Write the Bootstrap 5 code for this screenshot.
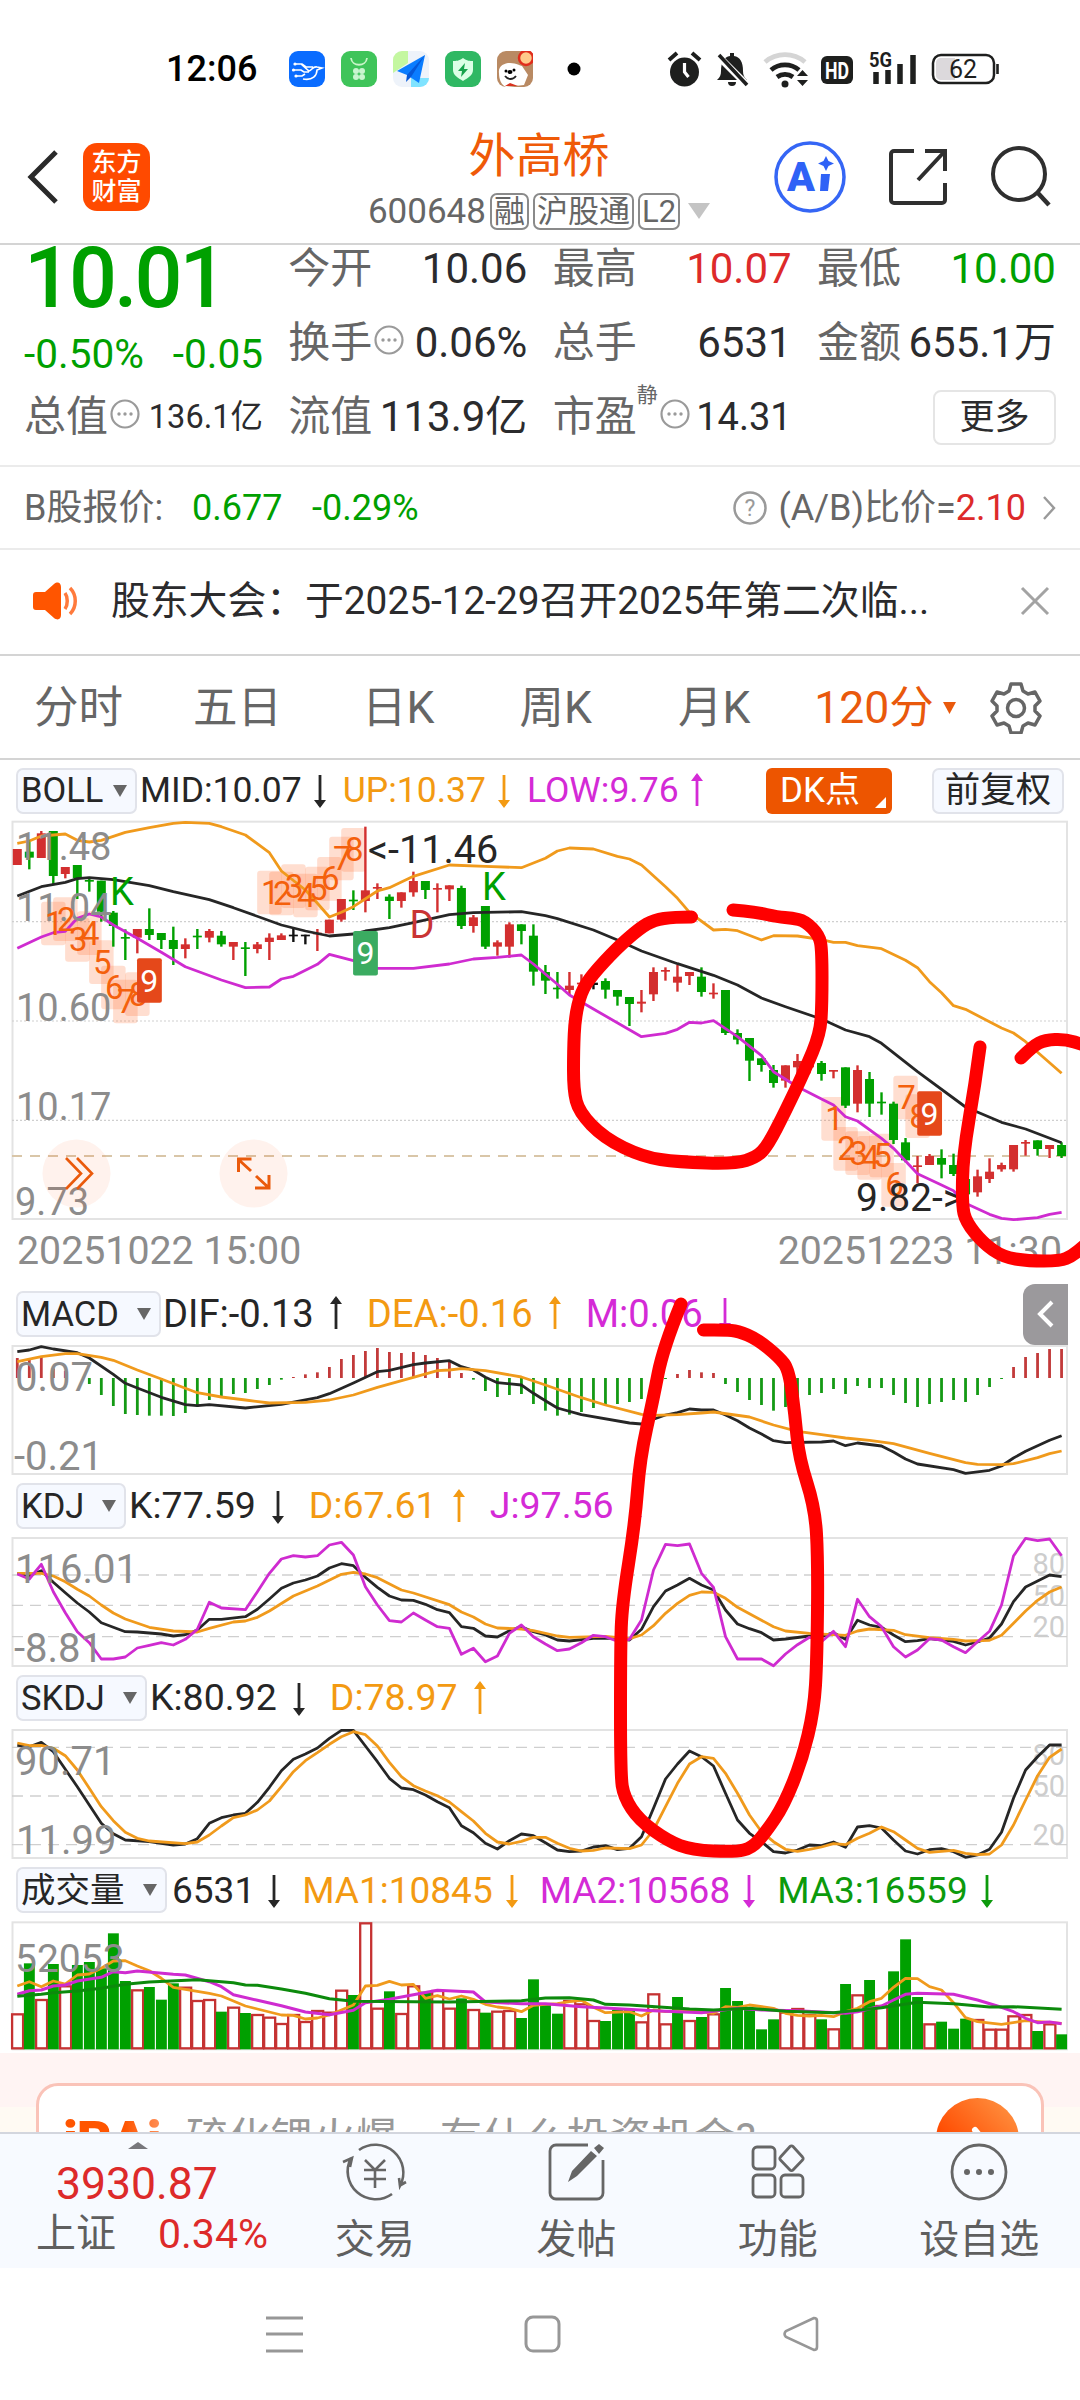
<!DOCTYPE html>
<html lang="zh-CN">
<head>
<meta charset="UTF-8">
<meta name="viewport" content="width=device-width, initial-scale=1">
<title>外高桥 600648</title>
<link rel="stylesheet" href="https://cdn.jsdelivr.net/npm/bootstrap@5.3.3/dist/css/bootstrap.min.css">
<style>
body {
	font-family: Roboto, "Noto Sans CJK SC", sans-serif;
	color: #2b2b2d;
	line-height: 1;
	background: #fff;
}
svg { display: block; flex: none; }
.phone { width: 1080px; height: 2400px; overflow: hidden; white-space: nowrap; }
.up { color: #dd2a2a; }
.down { color: #00a000; }
.soft { color: #666; }
.c-k { color: #262626; }
.c-o { color: #f39a12; }
.c-m { color: #d42ad6; }
.c-g { color: #0c9a0c; }

/* status bar */
.status { height: 108px; padding: 28px 81px 0 166px; }
.status-side { height: 82px; gap: 16px; }
.clock { font-size: 36px; font-weight: 500; color: #000; width: 107px; }

/* header */
.topbar { height: 137px; border-bottom: 2px solid #d4d4d4; padding: 2px 29px 0 27px; }
.side-box { width: 300px; }
.app-logo { width: 67px; height: 68px; border-radius: 14px; background: #ff4a00; color: #fff; font-size: 25px; font-weight: 500; line-height: 29px; margin-left: 24px; }
.title-box { padding-top: 8px; }
.stock-name { font-size: 47px; color: #ef5a08; }
.stock-code { font-size: 35px; color: #666; gap: 4px; margin-top: 14px; }
.tagbox { border: 2px solid #8a8a8a; border-radius: 7px; height: 37px; font-size: 31px; line-height: 33px; padding: 0 2px; }

/* quote */
.quote { height: 222px; border-bottom: 2px solid #ebebeb; padding: 0 24px; }
.col-q { width: 239px; }
.q-row { height: 74px; font-size: 42px; }
.q-first { margin-top: -13px; }
.price { font-size: 84.5px; font-weight: 500; letter-spacing: -3px; height: 84px; margin-top: -8px; }
.chg { font-size: 40.5px; height: 59px; padding-top: 13px; }
.btn-more { width: 123px; height: 55px; border: 2px solid #e5e5e5; border-radius: 8px; font-size: 35px; }
.bshare { height: 83px; border-bottom: 2px solid #ebebeb; font-size: 36px; padding: 0 24px 0 24px; }
.notice { height: 106px; border-bottom: 2px solid #d4d4d4; font-size: 38.8px; padding: 0 30px 2px 33px; }
.tabs-k { height: 104px; border-bottom: 2px solid #d4d4d4; font-size: 44.5px; color: #666; padding: 2px 0 0 34px; }
.tabs-k > :nth-child(2) { margin-left: 70px; }
.tabs-k > :nth-child(3) { margin-left: 80px; }
.tabs-k > :nth-child(4) { margin-left: 85px; }
.tabs-k > :nth-child(5) { margin-left: 86px; }
.tabs-k > :nth-child(6) { margin-left: 64px; }
.tabs-k > :nth-child(7) { margin-left: 34px; }

/* indicator legends */
.legend { height: 56px; padding-left: 16px; font-size: 37.5px; }
.legend-boll { height: 55px; padding-top: 6px; font-size: 35.5px; }
.legend-macd { font-size: 38.2px; }
.legend-vol { font-size: 37px; }
.pick { height: 46px; border: 2px solid #e1e3ea; border-radius: 7px; background: #f6f9ff; color: #262626; font-size: 34.5px; padding: 0 8px 0 3px; }
.arrow { margin-left: 16px; margin-right: 25px; }
.legend-boll .arrow { margin-left: 12px; margin-right: 17px; }
.legend-vol .arrow { margin-left: 13px; margin-right: 22px; }
.btn-dk { width: 126px; height: 46px; background: #ed5500; border-radius: 6px; color: #fff; font-size: 35px; padding-left: 14px; position: relative; }
.dk-corner { position: absolute; right: 6px; bottom: 6px; }
.btn-adj { width: 132px; margin-left: 40px; margin-right: 16px; padding: 0; font-size: 35.5px; }
.btn-fold { width: 45px; height: 61px; border-radius: 12px 0 0 12px; background: #9b999c; margin-right: 12px; }
.dates { height: 59px; font-size: 39.3px; color: #8c8c8c; padding: 5px 18px 0 17px; }

/* AI strip */
.ai-wrap { height: 79px; background: linear-gradient(#fff4f3 54px, #fffaf3 54px); padding: 30px 36px 0; overflow: hidden; }
.ai-card { height: 110px; border: 3px solid #fac3b8; border-radius: 22px; background: #fff; padding: 12px 22px 0 24px; }
.ai-logo { font-size: 54px; font-weight: 900; height: 80px; line-height: 86px; letter-spacing: -1px; background: linear-gradient(90deg, #ff5500 50%, #ffa477 90%); -webkit-background-clip: text; color: transparent; width: 123px; }
.ai-text { font-size: 42.3px; color: #999; line-height: 40px; padding-top: 21px; }
.ai-go { width: 83px; height: 83px; border-radius: 50%; background: linear-gradient(45deg, #ff4a00 30%, #ff9a48); }

/* bottom bars */
.bottombar { height: 136px; background: #f7faff; border-top: 2px solid #d3d6de; color: #5f5f5f; font-size: 40px; }
.idx-box { width: 274px; }
.nav-box { width: 201.5px; padding-top: 8px; gap: 18px; }
.sysbar { height: 131px; padding-left: 266px; gap: 221px; }
.scribble { position: absolute; left: 0; top: 0; pointer-events: none; }
</style>
</head>
<body>
<div class="phone position-relative">

	<div class="status d-flex justify-content-between">
		<div class="status-side d-flex align-items-center">
			<span class="clock">12:06</span>
			<svg width="36" height="36" viewBox="0 0 36 36"><rect width="36" height="36" rx="9" fill="#0a6cff"/><path d="M6 13h7l4 3h7M4 19h8l3 2h5M7 25h6l3-2M14 28c10 2 14-4 14-9l5-2-5-1c-4-1-5 3-8 4l-8-7" fill="none" stroke="#fff" stroke-width="1.600"/><circle cx="6" cy="13" r="1.600" fill="#fff"/><circle cx="4.500" cy="19" r="1.600" fill="#fff"/><circle cx="7" cy="25" r="1.600" fill="#fff"/></svg>
			<svg width="36" height="36" viewBox="0 0 36 36"><rect width="36" height="36" rx="9" fill="#3fc45a"/><path d="M10 7c1 9 15 9 16 0" fill="none" stroke="#c9f5c9" stroke-width="1.800"/><g fill="#c9f5d0"><circle cx="15" cy="20" r="3"/><circle cx="21" cy="20" r="3"/><circle cx="15" cy="26" r="3"/><circle cx="21" cy="26" r="3"/></g></svg>
			<svg width="36" height="36" viewBox="0 0 36 36"><rect width="36" height="36" rx="9" fill="#eef3fa"/><path d="M9 0h6v12L0 22V9a9 9 0 0 1 9-9z" fill="#c4f7a0"/><path d="M18 27h18a9 9 0 0 1-9 9h-9z" fill="#7fe3ff"/><path d="M32 4 4 20l10 4 12 8z" fill="#0a7dff"/><path d="M32 4 14 24l-1 7 5-5z" fill="#0558d8"/></svg>
			<svg width="36" height="36" viewBox="0 0 36 36"><rect width="36" height="36" rx="9" fill="#2fb863"/><path d="M18 7c4 3 7 3 10 3v9c0 5-5 8-10 11-5-3-10-6-10-11v-9c3 0 6 0 10-3z" fill="#dcffe6"/><path d="M20 12l-7 8h4l-1 6 7-8h-4z" fill="#17a34c"/></svg>
			<svg width="36" height="36" viewBox="0 0 36 36"><rect width="36" height="36" rx="9" fill="#b98a63"/><circle cx="29" cy="7" r="7" fill="#ffc98a" stroke="#e02d1c" stroke-width="2.500"/><path d="M2 22c-1-7 5-10 11-10 7 0 10 3 12 3l6 9-4 10-18 2c-5-2-7-8-7-14z" fill="#fff"/><path d="M8 25c3 4 8 4 11 0" fill="none" stroke="#222" stroke-width="1.800"/><circle cx="9" cy="20" r="1.500"/><circle cx="17" cy="19" r="1.500"/><ellipse cx="13" cy="21" rx="2.500" ry="2"/><path d="M8 35l5-3 8 3z" fill="#d8321e"/></svg>
			<svg width="70" height="36" viewBox="0 0 70 36"><circle cx="25" cy="18" r="6.500"/></svg>
		</div>
		<div class="status-side d-flex align-items-center">
			<svg width="332" height="40" viewBox="668 49 332 40">
				<g fill="#1e1f1e" stroke="none">
					<circle cx="685.500" cy="72" r="14.500"/>
					<path d="M670 60l8-7M701 60l-8-7" stroke="#1e1f1e" stroke-width="4"/>
					<path d="M685.500 63v9l4 5" stroke="#fff" stroke-width="3.200" fill="none"/>
					<path d="M718 80c3-3 4-5 4-9 0-9 3-14 9-15v-3h4v3c6 1 9 6 9 15 0 4 1 6 4 9zM729 82h8a4 4 0 0 1-8 0z"/>
					<path d="M719 56l29 29" stroke="#fff" stroke-width="7"/><path d="M720 55l28 30" stroke="#1e1f1e" stroke-width="3.600"/>
				</g>
				<g fill="none" stroke-width="4.800">
					<path d="M766 62a31 31 0 0 1 40 0" stroke="#d5d5d5"/><path d="M772 70a22 22 0 0 1 28 0" stroke="#1e1f1e"/><path d="M778 77a14 14 0 0 1 16 0" stroke="#1e1f1e"/>
				</g>
				<circle cx="786" cy="84" r="3.500" fill="#1e1f1e"/><path d="M798 76l5.500-6 5.500 6zM798 80h11l-5.500 6z" fill="#1e1f1e"/>
				<rect x="822" y="56" width="32" height="28" rx="6" fill="#1e1f1e"/><text x="826" y="78.500" textLength="24" lengthAdjust="spacingAndGlyphs" font-size="24" font-weight="700" fill="#fff">HD</text>
				<text x="870" y="67" textLength="23" lengthAdjust="spacingAndGlyphs" font-size="20" font-weight="700" fill="#1e1f1e">5G</text>
				<path d="M877 84V72M889 84V70M901 84V64M914 84V55" stroke="#1e1f1e" stroke-width="5.500"/>
				<rect x="934" y="55" width="61" height="28" rx="8" fill="none" stroke="#1e1f1e" stroke-width="2.500"/><path d="M941 58h15v22h-15a5 5 0 0 1-4-5V63a5 5 0 0 1 4-5z" fill="#dcd9dc"/><path d="M998.500 64v10" stroke="#1e1f1e" stroke-width="2.600"/>
				<text x="964" y="78" text-anchor="middle" font-size="25" fill="#1e1f1e">62</text>
			</svg>
		</div>
	</div>

	<div class="topbar d-flex align-items-center justify-content-between">
		<div class="side-box d-flex align-items-center">
			<svg width="32" height="56" viewBox="0 0 32 56"><path d="M29 3 4 28l25 25" fill="none" stroke="#2a2a2a" stroke-width="5"/></svg>
			<div class="app-logo d-flex flex-column justify-content-center text-center"><span>东方</span><span>财富</span></div>
		</div>
		<div class="title-box d-flex flex-column align-items-center">
			<div class="stock-name">外高桥</div>
			<div class="stock-code d-flex align-items-center">
				<span>600648</span><span class="tagbox">融</span><span class="tagbox">沪股通</span><span class="tagbox">L2</span>
				<svg class="ms-1" width="22" height="16" viewBox="0 0 22 16"><path d="M0 0h22L11 16z" fill="#c4c4c4"/></svg>
			</div>
		</div>
		<div class="side-box d-flex align-items-center justify-content-end">
			<svg width="72" height="72" viewBox="0 0 72 72"><circle cx="36" cy="36" r="34" fill="none" stroke="#3566f5" stroke-width="3.500"/><text x="13" y="50" font-size="41" font-weight="900" fill="#2f62f6">A</text><path d="M47 33h9l-2 17h-8z" fill="#2f62f6"/><path d="M52 15l2.500 5L60 22.500 54.500 25 52 30l-2.500-5-5.500-2.500 5.500-2.500z" fill="#2f62f6"/></svg>
			<svg width="60" height="60" viewBox="0 0 60 60" style="margin-left: 42px"><path d="M26 4H6a3 3 0 0 0-3 3v46a3 3 0 0 0 3 3h48a3 3 0 0 0 3-3V36M37 4h20v20M57 4 30 33" fill="none" stroke="#2f2f2f" stroke-width="4"/></svg>
			<svg width="60" height="62" viewBox="0 0 60 62" style="margin-left: 43px"><circle cx="28" cy="28" r="26" fill="none" stroke="#2f2f2f" stroke-width="4"/><path d="M46 46l12 13" stroke="#2f2f2f" stroke-width="4.500"/></svg>
		</div>
	</div>

	<div class="quote d-flex justify-content-between">
		<div class="col-q">
			<div class="price down">10.01</div>
			<div class="chg down d-flex justify-content-between"><span>-0.50%</span><span>-0.05</span></div>
			<div class="q-row d-flex align-items-center justify-content-between">
				<span class="d-flex align-items-center"><span class="soft">总值</span><svg width="32" height="36" viewBox="0 0 32 36"><use href="#dots"/></svg></span>
				<span style="font-size: 32.5px">136.1亿</span>
			</div>
		</div>
		<div class="col-q">
			<div class="q-row q-first d-flex align-items-center justify-content-between"><span class="soft">今开</span><span>10.06</span></div>
			<div class="q-row d-flex align-items-center justify-content-between"><span class="d-flex align-items-center"><span class="soft">换手</span><svg width="32" height="36" viewBox="0 0 32 36"><use href="#dots"/></svg></span><span>0.06%</span></div>
			<div class="q-row d-flex align-items-center justify-content-between"><span class="soft">流值</span><span>113.9亿</span></div>
		</div>
		<div class="col-q">
			<div class="q-row q-first d-flex align-items-center justify-content-between"><span class="soft">最高</span><span class="up">10.07</span></div>
			<div class="q-row d-flex align-items-center justify-content-between"><span class="soft">总手</span><span>6531</span></div>
			<div class="q-row d-flex align-items-center justify-content-between">
				<span class="d-flex align-items-center"><span class="soft">市盈</span><span class="soft align-self-start" style="font-size: 21px; margin-top: -11px">静</span><svg width="32" height="36" viewBox="0 0 32 36"><use href="#dots"/></svg></span>
				<span style="font-size: 38px">14.31</span>
			</div>
		</div>
		<div class="col-q">
			<div class="q-row q-first d-flex align-items-center justify-content-between"><span class="soft">最低</span><span class="down">10.00</span></div>
			<div class="q-row d-flex align-items-center justify-content-between"><span class="soft">金额</span><span>655.1万</span></div>
			<div class="q-row d-flex align-items-center justify-content-end"><span class="btn-more d-flex align-items-center justify-content-center">更多</span></div>
		</div>
	</div>

	<div class="bshare d-flex align-items-center">
		<span class="soft" style="width: 168px">B股报价:</span>
		<span class="down" style="width: 120px">0.677</span>
		<span class="down me-auto">-0.29%</span>
		<svg width="36" height="36" viewBox="0 0 36 36"><circle cx="18" cy="18" r="15.500" fill="none" stroke="#9a9a9a" stroke-width="2.500"/><text x="18" y="26" text-anchor="middle" font-size="23" fill="#9a9a9a">?</text></svg>
		<span class="soft" style="margin-left: 10px">(A/B)比价=</span><span class="up">2.10</span>
		<svg width="14" height="26" viewBox="0 0 14 26" style="margin-left: 16px"><path d="M2 2l10 11L2 24" fill="none" stroke="#9a9a9a" stroke-width="2.400"/></svg>
	</div>

	<div class="notice d-flex align-items-center">
		<svg width="46" height="38" viewBox="0 0 46 38"><path d="M3 10h9L21 2c4-3 7-1 7 3v28c0 4-3 6-7 3l-9-8H3a3 3 0 0 1-3-3V13a3 3 0 0 1 3-3z" fill="#ff5500"/><path d="M32 11c3 4 3 12 0 16M37 6c7 7 7 19 0 26" fill="none" stroke="#ff7a3c" stroke-width="3.500"/></svg>
		<span class="me-auto" style="margin-left: 32px">股东大会：于2025-12-29召开2025年第二次临...</span>
		<svg width="30" height="30" viewBox="0 0 30 30"><path d="M2 2l26 26M28 2 2 28" stroke="#a3a3a3" stroke-width="3"/></svg>
	</div>

	<div class="tabs-k d-flex align-items-center">
		<span>分时</span><span>五日</span><span>日K</span><span>周K</span><span>月K</span>
		<span class="d-flex align-items-center" style="color: #e9590c">120分<svg width="13" height="12" viewBox="0 0 13 12" style="margin-left: 9px"><path d="M0 0h13L6.500 12z" fill="#e9590c"/></svg></span>
		<svg width="52" height="52" viewBox="0 0 52 52"><path d="M21 2h10l2 7 5 3 7-2 5 9-5 5v5l5 5-5 9-7-2-5 3-2 7H21l-2-7-5-3-7 2-5-9 5-5v-5l-5-5 5-9 7 2 5-3z" fill="none" stroke="#666" stroke-width="3.500" stroke-linejoin="round"/><circle cx="26" cy="26" r="8.500" fill="none" stroke="#666" stroke-width="3.500"/></svg>
	</div>

	<div class="legend legend-boll d-flex align-items-center">
		<span class="pick d-flex align-items-center justify-content-between" style="width: 121px">BOLL<svg width="14" height="12" viewBox="0 0 14 12"><path d="M0 0h14L7 12z" fill="#666"/></svg></span>
		<span class="d-flex align-items-center" style="margin-left: 3px"><span class="ind c-k" data-dir="down">MID:10.07</span><span class="ind c-o" data-dir="down">UP:10.37</span><span class="ind c-m" data-dir="up">LOW:9.76</span></span>
		<span class="btn-dk d-flex align-items-center ms-auto">DK点<svg class="dk-corner" width="11" height="11" viewBox="0 0 11 11"><path d="M11 0v11H0z" fill="#fff"/></svg></span>
		<span class="pick btn-adj d-flex align-items-center justify-content-center">前复权</span>
	</div>
	<svg id="kline" width="1080" height="412" viewBox="0 0 1080 412"></svg>
	<div class="dates d-flex justify-content-between"><span>20251022 15:00</span><span>20251223 11:30</span></div>

	<div class="legend legend-macd d-flex align-items-center">
		<span class="pick d-flex align-items-center justify-content-between" style="width: 145px">MACD<svg width="14" height="12" viewBox="0 0 14 12"><path d="M0 0h14L7 12z" fill="#666"/></svg></span>
		<span class="d-flex align-items-center" style="margin-left: 2px"><span class="ind c-k" data-dir="up">DIF:-0.13</span><span class="ind c-o" data-dir="up">DEA:-0.16</span><span class="ind c-m" data-dir="down">M:0.06</span></span>
		<span class="btn-fold d-flex align-items-center justify-content-center ms-auto"><svg width="18" height="30" viewBox="0 0 18 30"><path d="M15 3 3 15l12 12" fill="none" stroke="#fff" stroke-width="4"/></svg></span>
	</div>
	<svg id="macd" width="1080" height="136" viewBox="0 62 1080 136"></svg>

	<div class="legend d-flex align-items-center">
		<span class="pick d-flex align-items-center justify-content-between" style="width: 110px">KDJ<svg width="14" height="12" viewBox="0 0 14 12"><path d="M0 0h14L7 12z" fill="#666"/></svg></span>
		<span class="d-flex align-items-center" style="margin-left: 3px"><span class="ind c-k" data-dir="down">K:77.59</span><span class="ind c-o" data-dir="up">D:67.61</span><span class="ind c-m" data-dir="down">J:97.56</span></span>
	</div>
	<svg id="kdj" width="1080" height="136" viewBox="0 254 1080 136"></svg>

	<div class="legend d-flex align-items-center">
		<span class="pick d-flex align-items-center justify-content-between" style="width: 131px">SKDJ<svg width="14" height="12" viewBox="0 0 14 12"><path d="M0 0h14L7 12z" fill="#666"/></svg></span>
		<span class="d-flex align-items-center" style="margin-left: 3px"><span class="ind c-k" data-dir="down">K:80.92</span><span class="ind c-o" data-dir="up">D:78.97</span></span>
	</div>
	<svg id="skdj" width="1080" height="136" viewBox="0 56 1080 136"></svg>

	<div class="legend legend-vol d-flex align-items-center">
		<span class="pick d-flex align-items-center justify-content-between" style="width: 151px">成交量<svg width="14" height="12" viewBox="0 0 14 12"><path d="M0 0h14L7 12z" fill="#666"/></svg></span>
		<span class="d-flex align-items-center" style="margin-left: 5px"><span class="ind c-k" data-dir="down">6531</span><span class="ind c-o" data-dir="down">MA1:10845</span><span class="ind c-m" data-dir="down">MA2:10568</span><span class="ind c-g" data-dir="down">MA3:16559</span></span>
	</div>
	<svg id="vol" width="1080" height="135" viewBox="0 248 1080 135"></svg>

	<div class="ai-wrap">
		<div class="ai-card d-flex">
			<span class="ai-logo">iRAi</span>
			<span class="ai-text me-auto">硫化锂火爆，有什么投资机会?</span>
			<span class="ai-go d-flex align-items-center justify-content-center"><svg width="30" height="40" viewBox="0 0 30 40"><path d="M12 10l10 12-10 12" fill="none" stroke="#fff" stroke-width="6" stroke-linecap="round"/></svg></span>
		</div>
	</div>

	<div class="bottombar d-flex">
		<div class="idx-box">
			<svg width="20" height="7" viewBox="0 0 20 7" style="margin: 8px 0 0 128px"><path d="M10 0l10 7H0z" fill="#77777c"/></svg>
			<div class="up" style="font-size: 44.5px; padding: 13px 0 0 56px">3930.87</div>
			<div class="d-flex align-items-center" style="padding: 7px 0 0 36px"><span style="width: 122px">上证</span><span class="up" style="font-size: 41px">0.34%</span></div>
		</div>
		<div class="nav-box d-flex flex-column align-items-center">
			<svg width="66" height="60" viewBox="0 0 66 60"><g fill="none" stroke="#666" stroke-width="2.600"><path d="M17 8a28 28 0 0 1 41 36l-1-8M57 44l7-4M50 52a28 28 0 0 1-41-36M1 20l9-4-2 9"/><path d="M23 18l10 10 10-10M22 28h22M22 37h22M33 28v18"/></g></svg>
			<span>交易</span>
		</div>
		<div class="nav-box d-flex flex-column align-items-center">
			<svg width="58" height="60" viewBox="0 0 58 60"><path d="M41 3H9a6 6 0 0 0-6 6v42a6 6 0 0 0 6 6h41a6 6 0 0 0 6-6V18" fill="none" stroke="#666" stroke-width="2.800"/><path d="M21 40l4-11 19-20 6 5-20 20zM47 6l5-4 5 4-5 6z" fill="#666"/></svg>
			<span>发帖</span>
		</div>
		<div class="nav-box d-flex flex-column align-items-center">
			<svg width="54" height="60" viewBox="0 0 54 60"><g fill="none" stroke="#666" stroke-width="2.800"><rect x="2" y="5" width="22" height="22" rx="4"/><rect x="2" y="33" width="22" height="22" rx="4"/><rect x="30" y="33" width="22" height="22" rx="4"/><path d="M39 4.500 29.500 15a2 2 0 0 0 0 3L39 28a2 2 0 0 0 3 0l9.500-10a2 2 0 0 0 0-3L42 4.500a2 2 0 0 0-3 0z"/></g></svg>
			<span>功能</span>
		</div>
		<div class="nav-box d-flex flex-column align-items-center">
			<svg width="58" height="60" viewBox="0 0 58 60"><circle cx="29" cy="30" r="27" fill="none" stroke="#666" stroke-width="2.800"/><g fill="#666"><circle cx="17" cy="30" r="3"/><circle cx="29" cy="30" r="3"/><circle cx="41" cy="30" r="3"/></g></svg>
			<span>设自选</span>
		</div>
	</div>

	<div class="sysbar d-flex align-items-center">
		<svg width="37" height="38" viewBox="0 0 37 38"><path d="M0 3h37M0 19h37M0 36h37" stroke="#979797" stroke-width="3"/></svg>
		<svg width="37" height="38" viewBox="0 0 37 38"><rect x="2" y="2" width="33" height="34" rx="7" fill="none" stroke="#979797" stroke-width="3"/></svg>
		<svg width="37" height="38" viewBox="0 0 37 38"><path d="M32 3 4 16q-3 3 0 6l28 13q3 0 3-3V6q0-3-3-3z" fill="none" stroke="#979797" stroke-width="2.600"/></svg>
	</div>

	<svg class="scribble" id="scribble" width="1080" height="2400" viewBox="0 0 1080 2400"></svg>
	<svg width="0" height="0"><defs><g id="dots"><circle cx="17" cy="15" r="13.500" fill="none" stroke="#9a9a9a" stroke-width="2.200"/><circle cx="11" cy="15" r="1.700" fill="#9a9a9a"/><circle cx="17" cy="15" r="1.700" fill="#9a9a9a"/><circle cx="23" cy="15" r="1.700" fill="#9a9a9a"/></g></defs></svg>
</div>

<script src="https://cdn.jsdelivr.net/npm/bootstrap@5.3.3/dist/js/bootstrap.bundle.min.js"></script>
<script>
const RED = '#d32f2f', GREEN = '#00a000', BLACK = '#262626', ORANGE = '#f09a1c', PINK = '#cf2bd0', GREY = '#8c8c8c';
const COLORS = { r: RED, g: GREEN, k: '#111' };

// One column every 12px; heights are stored in thirds of a pixel
const cx = i => 17.3 + i * 12.003;
const cy = v => v / 3;

// "0:85 1:78 ..." -> polyline
function line(data, color, width = 2.8) {
    const pts = data.trim().split(/\s+/).map(p => {
        const [i, v] = p.split(':').map(Number);
        return cx(i).toFixed(1) + ',' + cy(v).toFixed(1);
    }).join(' ');
    return `<polyline points="${pts}" fill="none" stroke="${color}" stroke-width="${width}" stroke-linejoin="round"/>`;
}
function frame(top, bottom) {
    return `<rect x="12.5" y="${cy(top)}" width="1054.5" height="${cy(bottom - top)}" fill="none" stroke="#e3e3e3" stroke-width="2"/>`;
}
function hline(v, color, dash, width = 1.2) {
    return `<line x1="12" x2="1067" y1="${cy(v)}" y2="${cy(v)}" stroke="${color}" stroke-width="${width}" stroke-dasharray="${dash}"/>`;
}
function label(x, v, txt, color = GREY, size = 38, anchor = 'start') {
    return `<text x="${x}" y="${cy(v)}" fill="${color}" font-size="${size}" text-anchor="${anchor}">${txt}</text>`;
}

// Trend arrows after each indicator value
document.querySelectorAll('.ind').forEach(el => {
    const head = el.dataset.dir === 'up' ? 'M6 0l6 8H0z' : 'M6 35l6-8H0z';
    el.insertAdjacentHTML('afterend',
        `<svg class="arrow" width="12" height="35" viewBox="0 0 12 35"><path d="M6 2v31" stroke="currentColor" stroke-width="2.8"/><path d="${head}" fill="currentColor"/></svg>`);
    el.nextElementSibling.style.color = getComputedStyle(el).color;
});

// Candles: colour, high, body top, body bottom, low
const candles = `r,102,102,150,150 g,80,110,128,163 r,48,55,129,129 g,48,48,183,207 r,156,156,177,190 g,150,150,190,252 g,190,195,200,230 g,197,197,290,320
g,288,293,333,395 g,343,366,371,435 r,342,342,368,415 g,280,342,360,375 g,354,354,375,402 g,335,375,402,450 r,370,388,402,430 g,342,362,367,402 r,342,348,368,382
g,348,362,388,395 r,381,381,395,435 g,381,397,402,483 r,381,388,402,415 r,355,368,381,435 r,355,361,375,375 k,342,359,364,381 k,359,359,364,388 r,342,353,358,408
r,314,314,355,355 r,252,252,314,320 g,226,254,259,285 r,35,226,258,292 r,205,216,221,252 g,238,245,258,312 r,232,232,258,278 r,170,198,232,245 g,198,198,225,252
r,205,219,224,292 r,211,211,223,258 g,212,219,333,342 r,300,307,333,353 g,273,273,395,402 r,376,382,395,422 r,322,328,395,428 g,328,328,348,388 g,328,362,470,512
g,450,471,497,537 g,471,518,523,551 r,471,512,525,540 r,478,503,508,525 k,503,503,510,523 g,490,498,524,551 g,525,525,545,572 g,546,546,567,633 r,525,560,566,592
r,457,471,538,558 r,457,465,470,497 r,450,485,503,530 r,471,471,483,510 g,457,485,531,545 r,505,533,538,551 g,525,525,654,660 g,643,654,674,688 g,669,669,737,798
g,730,730,750,770 g,750,765,804,818 r,751,751,797,818 r,717,738,757,785 r,735,744,757,775 g,738,744,777,797 r,765,765,770,790 g,757,757,872,879 r,751,765,866,892
g,771,792,866,906 g,832,860,865,899 g,860,866,975,987 g,969,982,1036,1042 r,1023,1051,1056,1105 r,1017,1023,1050,1050 g,1003,1029,1049,1090 g,1016,1050,1077,1083
g,1092,1092,1138,1138 r,1064,1084,1132,1145 r,1030,1070,1092,1104 r,1043,1050,1063,1070 r,990,990,1063,1070 r,975,981,986,1022 g,976,976,1002,1022 r,990,990,1002,1029 g,982,990,1023,1029`.split(/\s+/);

// Nine-turn marks: column index, centre, digit
const marks = [[3,325,1],[4,312,2],[5,374,3],[6,354,4],[7,441,5],[8,517,6],[9,559,7],[10,537,8],
    [21,232,1],[22,235,2],[23,213,3],[24,241,4],[25,220,5],[26,191,6],[27,130,7],[28,104,8],
    [68,911,1],[69,1001,2],[70,1014,3],[71,1028,4],[72,1021,5],[73,1109,6],[74,847,7],[75,903,8]];
const nines = [[11,496,'#e5481a'],[29,414,'#3bab61'],[76,895,'#e5481a']];

function drawKline() {
    let s = frame(20, 1212);
    [320, 618, 916].forEach(v => s += hline(v, '#cfcfcf', '2 2'));
    s += hline(1023, '#d9c6a8', '10 8', 1.8);
    marks.forEach(([i, v]) => s += `<rect x="${cx(i) - 12.2}" y="${cy(v - 65)}" width="24.5" height="43.7" rx="3" fill="#ff6a2a" fill-opacity=".22"/>`);
    candles.forEach((c, i) => {
        const [k, h, t, b, l] = c.split(',');
        s += `<path d="M${cx(i)} ${cy(+h)}V${cy(+l)}" stroke="${COLORS[k]}" stroke-width="2.4"/>`;
        s += `<rect x="${cx(i) - 4.5}" y="${cy(+t)}" width="9" height="${cy(b - t)}" fill="${COLORS[k]}"/>`;
    });
    s += line(`0:243 2:215 4:202 5:191 6:188 8:194 11:212 13:230 16:254 18:278 22:330 24:348 26:363 28:357 29:348 31:338 33:323 36:299 38:293 42:290 44:302 45:311
        48:345 50:375 52:408 55:446 58:481 60:510 62:549 64:575 67:612 69:645 71:665 72:685 75:770 79:876 82:922 84:942 87:983`, BLACK);
    s += line(`0:85 1:78 2:63 4:57 5:76 6:81 7:76 9:52 11:38 13:25 14:22 16:25 17:35 19:60 21:113 22:168 24:225 25:265 26:306 27:292 28:275 30:228 31:218 33:184 36:150
        39:154 42:158 44:130 45:108 46:99 48:102 50:124 51:132 52:150 54:215 55:250 56:292 58:345 59:343 60:347 62:375 63:362 65:363 67:374 68:382 69:382 70:392 72:401
        74:436 75:458 76:500 77:533 78:572 79:583 82:639 83:654 84:680 87:775`, ORANGE);
    s += line(`0:400 2:366 3:353 4:349 5:310 6:297 7:306 8:330 10:370 12:412 14:455 17:495 19:518 21:516 22:492 23:484 25:448 26:418 28:437 30:460 33:460 36:447 38:432
        40:427 42:420 43:447 45:508 46:540 48:582 52:665 54:655 55:643 56:622 57:624 58:617 60:665 62:722 63:770 65:815 67:852 68:870 69:905 70:918 72:970 73:1000 75:1076
        77:1110 78:1127 79:1165 81:1198 82:1210 83:1214 85:1208 86:1198 87:1192`, PINK);
    s += label(16, 135, '11.48') + label(16, 317, '11.04') + label(16, 618, '10.60') + label(16, 914, '10.17') + label(15, 1200, '9.73');
    marks.forEach(([i, v, n]) => s += label(cx(i) + 1, v + 35, n, '#f4600c', 33, 'middle'));
    nines.forEach(([i, v, c]) => {
        s += `<rect x="${cx(i) - 12.3}" y="${cy(v - 66)}" width="24.8" height="44.500" rx="2" fill="${c}"/>` + label(cx(i), v + 34, 9, '#fff', 32, 'middle');
    });
    s += label(122, 271, 'K', GREEN, 38, 'middle') + label(494, 256, 'K', GREEN, 38, 'middle') + label(422, 368, 'D', '#c93434', 38, 'middle');
    s += label(368, 143, '&lt;-11.46', BLACK, 39.5) + label(856, 1187, '9.82-&gt;', BLACK, 39);
    s += `<circle cx="76.500" cy="358.500" r="34" fill="#ff5a14" fill-opacity=".08"/><path d="M66 343l15 15.500L66 374M77 343l15 15.500L77 374" fill="none" stroke="#ea5a0c" stroke-width="2.600"/>`;
    s += `<circle cx="253.500" cy="358.500" r="34" fill="#ff5a14" fill-opacity=".08"/><path d="M238.500 357v-13h13M239 345l12 11M269 360v13h-14M269 373l-13-12" fill="none" stroke="#ea5a0c" stroke-width="3"/>`;
    document.getElementById('kline').innerHTML = s;
}

function drawMacd() {
    const bars = [234,240,228,265,272,0,312,345,378,402,405,407,407,408,399,380,360,352,342,339,327,315,299,291,283,277,261,237,225,213,204,216,219,216,225,234,245,279,299,333,
        351,345,342,372,392,407,404,396,384,375,372,366,357,330,297,282,270,277,279,312,336,360,375,392,381,360,345,339,327,342,318,324,324,345,369,381,372,366,360,366,345,321,297,
        261,231,219,207,207];
    let s = frame(198, 582);
    bars.forEach((v, i) => {
        if (v) s += `<path d="M${cx(i)} ${cy(294)}V${cy(v)}" stroke="${v < 294 ? '#c23a3a' : '#149a14'}" stroke-width="2.8"/>`;
    });
    s += line(`0:215 1:210 2:200 3:207 5:218 6:234 8:283 9:310 10:324 12:352 14:374 15:377 16:374 19:384 22:373 25:353 26:341 28:309 30:275 31:271 33:254 34:249 36:242 37:260
        38:270 39:292 40:308 42:315 43:340 44:362 45:384 47:404 51:429 52:432 53:418 54:405 55:398 56:387 57:390 58:390 59:405 60:422 61:444 62:462 63:482 64:488 67:486 68:483
        69:497 70:489 72:498 73:516 74:537 75:552 78:569 79:580 81:571 82:558 83:534 84:514 85:497 86:481 87:467`, BLACK);
    s += line(`0:245 2:230 4:221 5:221 7:232 8:241 10:270 12:297 14:325 15:338 17:351 19:360 21:369 24:367 26:360 28:345 30:322 33:292 35:272 36:270 37:266 39:272 42:291
        44:315 47:353 49:375 52:403 53:406 55:404 57:399 58:396 61:411 63:435 65:454 67:464 69:474 71:481 73:491 76:520 79:548 80:553 82:554 83:551 85:533 86:521 87:513`, ORANGE);
    s += label(15, 332, '0.07', GREY, 40) + label(14, 569, '-0.21', GREY, 40);
    document.getElementById('macd').innerHTML = s;
}

function drawKdj() {
    let s = frame(774, 1158);
    [885, 976, 1070].forEach(v => s += hline(v, '#cfcfcf', '11 7', 1.4));
    s += label(1065, 883, '80', '#cdcdcd', 29, 'end') + label(1065, 977, '50', '#cdcdcd', 29, 'end') + label(1065, 1070, '20', '#cdcdcd', 29, 'end');
    s += line(`0:880 1:887 2:872 3:907 4:938 5:969 6:996 7:1028 8:1042 9:1055 10:1056 12:1062 13:1068 14:1064 15:1050 16:1018 17:1018 19:1010 20:988 21:957 22:925 23:909
        24:900 25:888 26:864 27:851 28:857 29:892 30:922 31:948 32:960 33:961 34:973 35:989 36:998 37:1040 38:1045 39:1068 40:1071 41:1052 42:1040 43:1055 44:1065 45:1080
        46:1083 48:1075 50:1075 51:1080 52:1048 53:980 54:933 55:915 56:895 57:915 58:930 59:990 60:1032 61:1046 62:1058 63:1080 64:1077 66:1068 67:1070 68:1058 69:1078
        70:1021 71:1035 72:1042 73:1065 74:1085 75:1082 76:1076 78:1084 79:1095 80:1086 81:1074 82:1032 83:965 84:921 85:903 86:885 87:890`, BLACK);
    s += line(`0:880 2:880 3:888 4:905 5:928 6:948 7:975 8:999 9:1017 11:1042 13:1053 15:1056 16:1045 18:1026 19:1023 20:1012 21:993 23:948 25:918 27:883 28:877 29:882
        30:893 32:930 33:939 36:974 37:996 38:1011 39:1032 40:1044 42:1047 43:1052 45:1068 46:1072 49:1069 51:1076 52:1065 53:1037 54:1000 55:970 56:946 57:936 58:937 59:955
        60:982 63:1040 64:1053 66:1060 69:1066 70:1053 71:1047 73:1051 74:1064 76:1073 78:1078 79:1083 81:1081 82:1066 83:1030 84:993 85:961 86:936 87:921`, ORANGE);
    s += line(`0:882 1:897 2:853 3:935 4:998 5:1055 6:1088 7:1137 8:1137 9:1131 10:1104 11:1096 12:1088 13:1095 14:1078 15:1048 16:967 17:984 19:989 20:935 21:880 22:837
        23:827 24:831 25:827 26:795 27:787 28:825 29:920 30:975 31:1022 32:1026 33:999 34:1020 35:1040 36:1045 37:1123 38:1105 39:1145 40:1128 41:1060 42:1035 43:1070 44:1092
        45:1112 46:1107 47:1088 48:1066 49:1070 50:1084 51:1078 52:1020 53:870 54:793 55:797 56:792 57:880 58:922 59:1070 60:1137 62:1137 63:1157 64:1122 65:1094 66:1072
        67:1085 68:1054 69:1100 70:958 71:1010 72:1040 73:1100 74:1131 75:1110 76:1076 77:1080 78:1100 79:1118 80:1085 81:1054 82:975 83:828 84:775 85:782 86:777 87:827`, PINK);
    s += label(15, 908, '116.01', GREY, 40) + label(14, 1145, '-8.81', GREY, 40);
    document.getElementById('kdj').innerHTML = s;
}

function drawSkdj() {
    let s = frame(180, 564);
    [232, 378, 524].forEach(v => s += hline(v, '#cfcfcf', '11 7', 1.4));
    s += label(1065, 285, '80', '#cdcdcd', 29, 'end') + label(1065, 377, '50', '#cdcdcd', 29, 'end') + label(1065, 524, '20', '#cdcdcd', 29, 'end');
    s += line(`0:226 1:230 2:217 3:245 4:298 5:350 6:405 7:460 8:491 9:510 11:515 13:525 14:522 15:506 16:460 17:443 18:435 19:430 20:397 21:352 22:302 23:268 24:252 25:234
        26:205 27:181 28:181 29:228 30:275 31:325 32:354 33:359 34:375 35:395 36:413 37:467 38:488 39:520 40:537 41:512 42:492 43:497 44:518 45:540 46:545 47:543 48:531 49:527
        50:539 51:535 52:500 53:415 54:327 55:282 56:243 57:260 58:288 59:370 60:450 61:490 62:515 63:545 64:549 65:540 66:525 67:527 68:516 69:532 70:471 71:467 72:474 73:510
        74:543 75:552 76:539 77:536 78:545 79:562 80:555 81:538 82:487 83:385 84:300 85:260 86:225 87:225`, BLACK);
    s += line(`0:219 1:227 2:226 3:235 4:257 5:300 6:355 7:410 8:452 9:487 10:505 11:513 14:521 15:516 16:495 17:468 18:443 19:435 20:420 21:393 22:350 23:305 24:272 25:248
        26:223 27:200 28:185 29:194 30:228 31:277 32:320 33:347 34:363 35:377 36:396 37:425 38:453 39:490 40:516 41:522 42:514 43:502 44:502 45:520 46:535 47:543 48:541 49:534
        51:536 52:525 53:480 54:410 55:340 56:282 57:260 58:265 59:310 60:370 61:435 62:485 63:515 64:538 65:544 66:538 67:531 68:521 69:524 70:505 71:490 72:471 73:485 74:510
        75:535 76:547 78:541 79:550 80:554 81:552 82:525 83:465 84:390 85:317 86:262 87:237`, ORANGE);
    s += label(15, 314, '90.71', GREY, 40) + label(16, 551, '11.99', GREY, 40);
    document.getElementById('skdj').innerHTML = s;
}

function drawVol() {
    const bars = `r1030 g880 r987 g882 r946 g885 g876 g895 g790 g933 r958 g951 g989 g940 r950 r990 r987 g1025 r1010 g1029 r1032 r1040 r1059 r1032 r1053 r1020 r1025 r959 g975
        r757 r1013 g964 r1029 r946 g965 r960 r1013 g985 r1017 g1028 r1022 r1020 g1044 g928 g1005 g1031 r990 r1000 r1050 g1053 g1020 g1018 r1054 r970 r1060 g981 r1050 g1041
        r1030 g954 g993 g1018 g1078 g1048 r1025 r1014 r1032 g1048 r1075 g942 r973 g930 r1005 g904 g808 g981 r1060 g1055 g1076 g1046 r1047 r1076 r1076 r1036 r1032 g1083 r1060 g1093`.split(/\s+/);
    let s = frame(757, 1138);
    bars.forEach((b, i) => {
        const v = +b.slice(1);
        s += b[0] === 'g'
            ? `<rect x="${cx(i) - 5.4}" y="${cy(v)}" width="10.9" height="${cy(1138 - v)}" fill="${GREEN}"/>`
            : `<rect x="${cx(i) - 5.2}" y="${cy(v) + 1}" width="11" height="${cy(1138 - v) - 2}" fill="#fff" stroke="#c53232" stroke-width="2.3"/>`;
    });
    s += line(`0:948 1:935 2:950 3:933 4:942 5:915 6:912 7:895 8:873 9:872 10:888 11:902 12:925 13:952 16:970 17:978 18:993 19:1008 20:1017 22:1035 23:1036 24:1047 25:1044
        26:1035 27:1020 28:1005 29:948 30:946 31:934 32:945 33:943 34:985 35:977 36:987 37:978 38:988 39:1003 40:1011 41:1015 42:1025 43:1006 44:1003 45:1001 46:995 47:991
        48:1012 49:1028 51:1025 52:1038 53:1020 54:1025 56:1020 58:1030 59:1010 60:1012 61:1005 63:1015 64:1030 65:1036 66:1038 67:1036 68:1040 69:1025 70:1015 71:995 72:985
        73:952 74:925 75:926 76:950 77:960 78:998 79:1043 80:1055 82:1063 84:1052 87:1060`, ORANGE);
    s += line(`0:973 1:962 2:960 3:948 4:945 5:933 7:922 8:905 9:908 10:903 13:913 14:915 16:935 17:950 18:974 20:991 22:1007 24:1026 26:1034 28:1021 29:998 31:988 33:974
        35:961 38:966 39:996 42:1001 44:1001 47:1010 49:1014 53:1022 57:1028 60:1015 62:1020 65:1022 69:1030 70:1025 72:1008 73:990 74:973 75:970 78:973 80:990 82:1012 83:1025
        84:1045 85:1058 86:1056 87:1061`, PINK, 3);
    s += line(`0:979 2:973 3:968 5:963 7:955 9:943 11:936 15:929 18:938 19:945 20:946 22:957 24:970 26:986 28:994 33:995 36:996 42:992 44:984 46:983 48:990 49:1003 51:1005
        56:1017 58:1020 61:1015 64:1024 68:1028 71:1017 72:1013 75:997 78:1001 81:1011 83:1010 87:1018`, '#0c8a0c', 3);
    s += label(15, 905, '52053', GREY, 39);
    document.getElementById('vol').innerHTML = s;
}

// Freehand marks over the charts, smoothed through the midpoints
const strokes = [
    [[691.5,917],[674,917],[654,920],[640,928],[617,948],[592,975],[581,992],[575,1018],[573.5,1050],[573.5,1090],[579,1112],[604,1138],[643,1157],[678,1162],[735,1164],[757,1157],[768,1145],[785,1112],[805,1070],[820,1034],[822,1005],[822,950],[819,935],[805,921],[792,918],[778,917],[755,912],[733,910]],
    [[980,1047],[975,1085],[963,1155],[962,1205],[966,1222],[983,1243],[1003,1257],[1028,1261],[1060,1261],[1072,1256],[1084,1246]],
    [[1021,1058],[1033,1046],[1045,1040],[1065,1039],[1084,1045]],
    [[681,1304],[663,1348],[653,1400],[640,1458],[635,1523],[622,1605],[620.5,1650],[620.5,1775],[624,1797],[639,1820],[668,1841],[692,1850],[735,1852],[752,1848],[766,1832],[784,1805],[802,1760],[814,1710],[817,1660],[818,1560],[815,1508],[799,1458],[795,1415],[789,1370],[779,1357],[757,1339],[738,1331],[725,1330],[703.5,1330]]
];
function drawScribble() {
    document.getElementById('scribble').innerHTML = strokes.map(p => {
        let d = `M${p[0]}`;
        for (let i = 1; i < p.length - 1; i++) {
            d += `Q${p[i]} ${(p[i][0] + p[i + 1][0]) / 2},${(p[i][1] + p[i + 1][1]) / 2}`;
        }
        d += `L${p[p.length - 1]}`;
        return `<path d="${d}" fill="none" stroke="#ff0000" stroke-width="13" stroke-linecap="round" stroke-linejoin="round"/>`;
    }).join('');
}

drawKline();
drawMacd();
drawKdj();
drawSkdj();
drawVol();
drawScribble();
</script>
</body>
</html>
